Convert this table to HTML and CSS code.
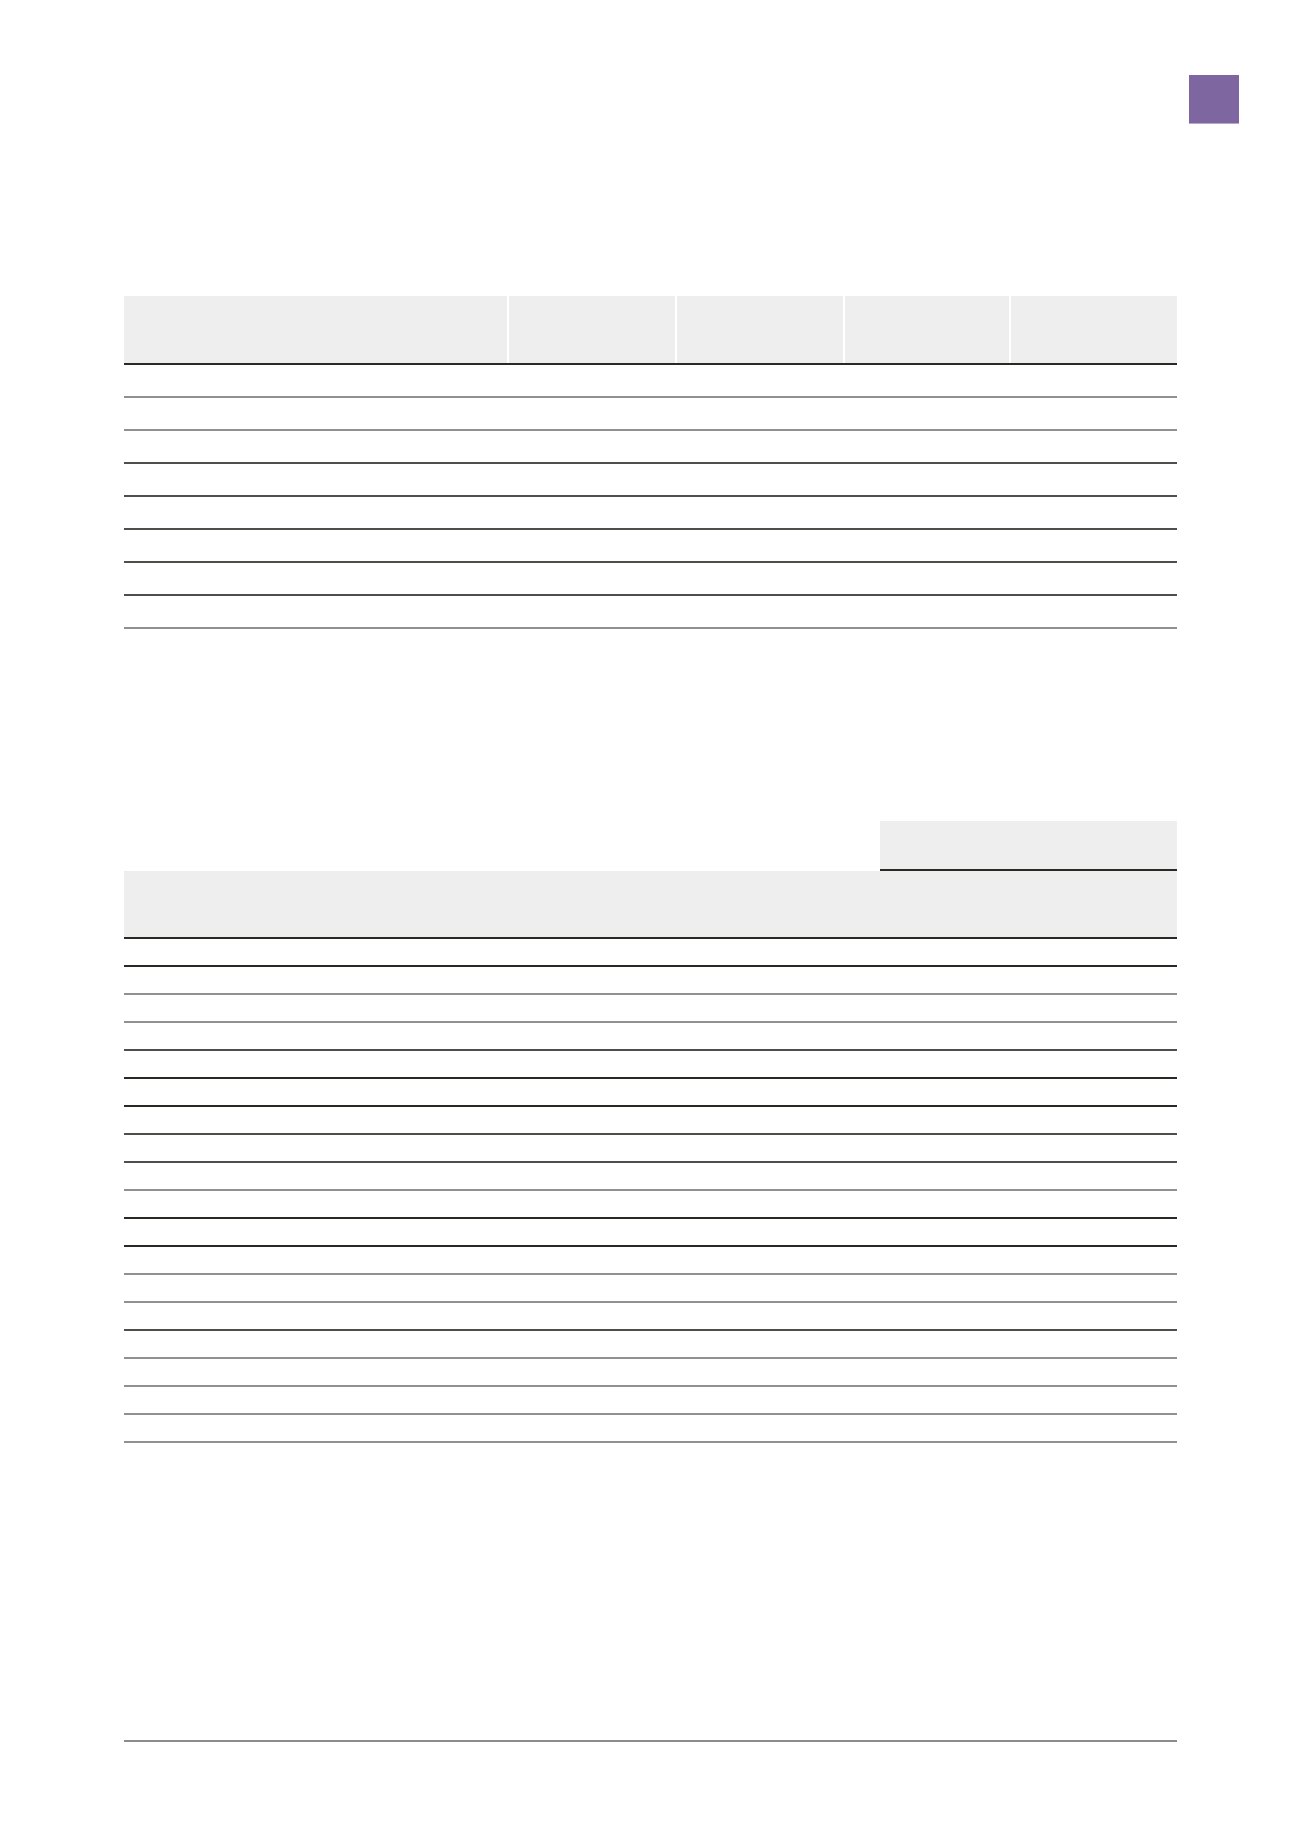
FILE: index.html
```html
<!DOCTYPE html>
<html lang="en">
<head>
<meta charset="utf-8">
<title>Report page</title>
<link rel="stylesheet" href="styles.css">
</head>
<body>
<div class="page">
  <header class="page-top">
    <div class="tab-marker"></div>
  </header>

  <section class="table t1">
    <div class="row head">
      <div class="cell"></div><div class="cell"></div><div class="cell"></div><div class="cell"></div><div class="cell"></div>
    </div>
    <div class="row l-gray"><div class="cell"></div></div>
    <div class="row l-gray"><div class="cell"></div></div>
    <div class="row l-dark"><div class="cell"></div></div>
    <div class="row l-dark"><div class="cell"></div></div>
    <div class="row l-dark"><div class="cell"></div></div>
    <div class="row l-dark"><div class="cell"></div></div>
    <div class="row l-dark"><div class="cell"></div></div>
    <div class="row l-gray"><div class="cell"></div></div>
  </section>

  <section class="table t2">
    <div class="row top">
      <div class="cell blank"></div><div class="cell group"></div>
    </div>
    <div class="row head"><div class="cell"></div><div class="cell"></div><div class="cell"></div></div>
    <div class="row l-black"><div class="cell"></div></div>
    <div class="row l-gray"><div class="cell"></div></div>
    <div class="row l-gray"><div class="cell"></div></div>
    <div class="row l-dark"><div class="cell"></div></div>
    <div class="row l-black"><div class="cell"></div></div>
    <div class="row l-black"><div class="cell"></div></div>
    <div class="row l-dark"><div class="cell"></div></div>
    <div class="row l-dark"><div class="cell"></div></div>
    <div class="row l-gray"><div class="cell"></div></div>
    <div class="row l-black"><div class="cell"></div></div>
    <div class="row l-black"><div class="cell"></div></div>
    <div class="row l-gray"><div class="cell"></div></div>
    <div class="row l-gray"><div class="cell"></div></div>
    <div class="row l-dark"><div class="cell"></div></div>
    <div class="row l-gray"><div class="cell"></div></div>
    <div class="row l-gray"><div class="cell"></div></div>
    <div class="row l-gray"><div class="cell"></div></div>
    <div class="row l-gray"><div class="cell"></div></div>
  </section>

  <footer class="page-foot"></footer>
</div>
</body>
</html>
```

FILE: styles.css
```css
html, body {
  margin: 0;
  padding: 0;
  background: #ffffff;
  font-family: "Liberation Sans", Arial, sans-serif;
}

.page {
  width: 1300px;
  min-height: 1839px;
  box-sizing: border-box;
  padding: 75px 0 0 124px;
}

.page-top {
  display: flex;
  justify-content: flex-end;
  width: 1115px;
}

.tab-marker {
  width: 50px;
  height: 48px;
  background: #7e67a0;
  border-bottom: 1px solid #b6a8c9;
}

.table {
  width: 1053px;
  display: flex;
  flex-direction: column;
}

.t1 {
  margin-top: 172px;
}

.t2 {
  margin-top: 192px;
}

.row {
  display: grid;
  box-sizing: content-box;
}

.t1 .row {
  grid-template-columns: 383px 166px 166px 164px 166px;
  column-gap: 2px;
  height: 31px;
  border-bottom: 2px solid #8e8e8c;
}

.t1 .row.head {
  height: 67px;
  border-bottom: 2px solid #2a2924;
}

.t1 .row.head .cell {
  background: #eeeeee;
}

.t2 .row {
  grid-template-columns: 756px 86px 211px;
  height: 26px;
  border-bottom: 2px solid #8e8e8c;
}

.t2 .row.top {
  grid-template-columns: 756px 297px;
  height: 50px;
  border-bottom: none;
}

.t2 .row.top .group {
  background: #eeeeee;
  height: 48px;
  border-bottom: 2px solid #2a2924;
}

.t2 .row.head {
  height: 66px;
  background: #eeeeee;
  border-bottom: 2px solid #2a2924;
}

.row.l-gray { border-bottom-color: #909090; }
.row.l-dark { border-bottom-color: #4f4e4a; }
.row.l-black { border-bottom-color: #2a2924; }

.page-foot {
  width: 1053px;
  margin-top: 297px;
  border-top: 2px solid #8c8c88;
}
```
